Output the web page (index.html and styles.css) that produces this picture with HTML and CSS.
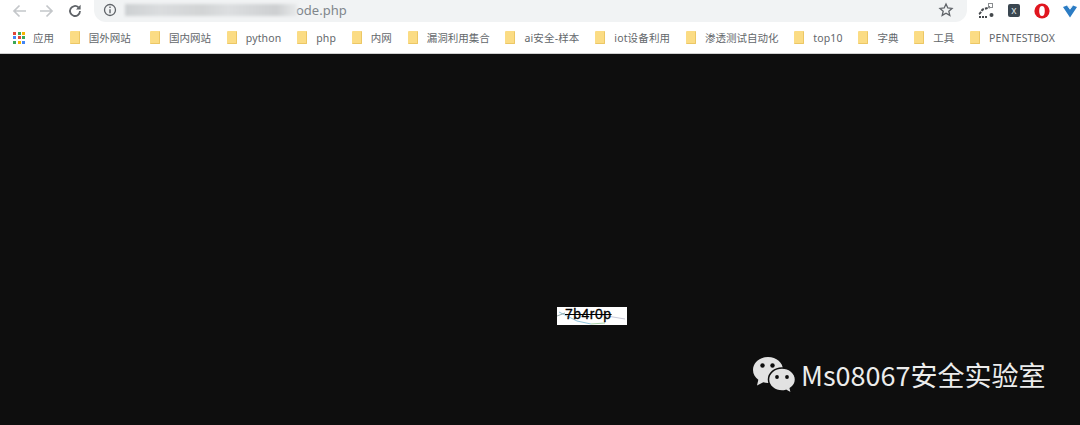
FILE: index.html
```html
<!DOCTYPE html>
<html lang="en">
<head>
    <meta charset="UTF-8">
    <title>code.php</title>
    <link rel="stylesheet" href="styles.css">
</head>
<body>
    <div class="toolbar">
        <div class="nav">
            <svg class="nav-icon" viewBox="0 0 16 16"><path d="M15 8H3M8.500 2.500L3 8l5.500 5.500" fill="none" stroke="#c4c7ca" stroke-width="1.700"/></svg>
            <svg class="nav-icon" viewBox="0 0 16 16"><path d="M1 8h12M7.500 2.500L13 8l-5.500 5.500" fill="none" stroke="#c4c7ca" stroke-width="1.700"/></svg>
            <svg class="nav-icon" viewBox="0 0 16 16"><path d="M13 8a5 5 0 1 1-1.500-3.600" fill="none" stroke="#5f6368" stroke-width="1.800"/><path d="M13.600 1.800v4.600H9z" fill="#5f6368"/></svg>
        </div>
        <div class="omnibox">
            <svg class="info" viewBox="0 0 14 14"><circle cx="7" cy="7" r="5.500" fill="none" stroke="#5f6368" stroke-width="1.300"/><path d="M7 6.200v4M7 3.600v1.400" stroke="#5f6368" stroke-width="1.400"/></svg>
            <div class="url">
                <span class="url-blur"></span>
                <span class="url-text">ode.php</span>
            </div>
            <svg class="star" viewBox="0 0 16 16"><path d="M8 2l1.800 4 4.200.4-3.200 2.800 1 4.200L8 11.200l-3.800 2.200 1-4.200L2 6.400 6.200 6z" fill="none" stroke="#5f6368" stroke-width="1.300"/></svg>
        </div>
        <div class="extensions">
            <svg class="ext" viewBox="0 0 16 16"><path d="M1 11c2-1 2-4 5-5s4-1 6-2" fill="none" stroke="#44484c" stroke-width="2" stroke-dasharray="3 1"/><rect x="10.500" y="0.500" width="4" height="4" fill="none" stroke="#8a8d90"/><circle cx="13.500" cy="12" r="2" fill="#44484c"/><path d="M1 13h2v2H1zM4 13h2v2H4zM7 13h2v2H7z" fill="#44484c"/></svg>
            <span class="ext-x">x</span>
            <svg class="ext" viewBox="0 0 16 16"><circle cx="8" cy="8" r="7.600" fill="#e0161f"/><ellipse cx="8" cy="8" rx="2.800" ry="5" fill="#fff"/></svg>
            <svg class="ext" viewBox="0 0 16 16"><path d="M1 4l4-1.500 3 4 3-4 4 1.500-7 10.500z" fill="#2b7cc4"/><path d="M5 2.500l3 4 3-4-3 1z" fill="#e8f2fa"/></svg>
        </div>
    </div>
    <div class="bookmarks">
        <div class="bookmark apps-item">
            <div class="apps">
                <i class="r"></i><i class="g"></i><i class="y"></i>
                <i class="b"></i><i class="r"></i><i class="g"></i>
                <i class="g"></i><i class="y"></i><i class="b"></i>
            </div>
            <span>应用</span>
        </div>
        <div class="bookmark"><i class="folder"></i><span>国外网站</span></div>
        <div class="bookmark wide"><i class="folder"></i><span>国内网站</span></div>
        <div class="bookmark"><i class="folder"></i><span class="latin">python</span></div>
        <div class="bookmark"><i class="folder"></i><span class="latin">php</span></div>
        <div class="bookmark"><i class="folder"></i><span>内网</span></div>
        <div class="bookmark"><i class="folder"></i><span>漏洞利用集合</span></div>
        <div class="bookmark"><i class="folder"></i><span class="latin">ai安全-样本</span></div>
        <div class="bookmark"><i class="folder"></i><span class="latin">iot设备利用</span></div>
        <div class="bookmark"><i class="folder"></i><span>渗透测试自动化</span></div>
        <div class="bookmark"><i class="folder"></i><span class="latin">top10</span></div>
        <div class="bookmark"><i class="folder"></i><span>字典</span></div>
        <div class="bookmark"><i class="folder"></i><span>工具</span></div>
        <div class="bookmark"><i class="folder"></i><span class="latin">PENTESTBOX</span></div>
    </div>
    <div class="page">
        <div class="captcha">
            <svg class="captcha-lines" viewBox="0 0 70 18"><path d="M2 5l18 9 14 3" fill="none" stroke="#8fc3dc"/><path d="M34 17l14-1" stroke="#a8d0a8" fill="none"/><path d="M44 8l24 4" stroke="#c8c8d8" fill="none"/><path d="M0 9l8-3" stroke="#9aa" fill="none"/></svg>
            <span class="captcha-text">7b4r0p</span>
        </div>
    </div>
    <div class="watermark">
        <svg class="wechat" viewBox="0 0 44 38">
            <path d="M16 1C7.500 1 1 6.800 1 14c0 4 2.100 7.400 5.300 9.800L5 29.500l6.300-3.300c1.500.4 3 .7 4.700.7 8.500 0 15-5.800 15-13S24.500 1 16 1z" fill="#e2e2e2"/>
            <path d="M30 12c-7.500 0-13.500 5.200-13.500 11.500S22.500 35 30 35c1.400 0 2.800-.2 4-.6l5.500 3-1.200-5c3.300-2.100 5.200-5.400 5.200-8.900C43.500 17.200 37.500 12 30 12z" fill="#e2e2e2" stroke="#0e0e0e" stroke-width="1.500"/>
            <circle cx="10.500" cy="9.500" r="2.200" fill="#0e0e0e"/>
            <circle cx="20.500" cy="9.500" r="2.200" fill="#0e0e0e"/>
            <circle cx="25" cy="21" r="1.900" fill="#0e0e0e"/>
            <circle cx="35" cy="21" r="1.900" fill="#0e0e0e"/>
        </svg>
        <span class="watermark-text">Ms08067安全实验室</span>
    </div>
</body>
</html>
```

FILE: styles.css
```css
html, body {
    margin: 0;
    padding: 0;
    height: 425px;
    overflow: hidden;
    background: #0e0e0e;
    font-family: "Noto Sans", "Noto Sans CJK SC", sans-serif;
}
.toolbar {
    display: flex;
    height: 22px;
    background: #fff;
}
.nav {
    display: flex;
    align-items: center;
    gap: 12px;
    width: 94px;
    padding: 0 0 1px 11px;
    box-sizing: border-box;
}
.nav-icon {
    width: 16px;
    height: 16px;
}
.omnibox {
    display: flex;
    align-items: center;
    width: 873px;
    height: 22px;
    padding: 0 13px 2px 9px;
    box-sizing: border-box;
    background: #f1f3f4;
    border-radius: 0 0 12px 12px;
}
.info {
    width: 14px;
    height: 14px;
    flex: none;
}
.url {
    display: flex;
    align-items: center;
    flex: 1;
    margin-left: 8px;
}
.url-blur {
    width: 172px;
    height: 12px;
    background: linear-gradient(90deg, #cdd0d2, #dadcde 20%, #d2d4d5 45%, #dcdee0 60%, #cdcfd1 88%, #e8eaeb);
    filter: blur(1.500px);
}
.url-text {
    margin-left: -1px;
    font-size: 13px;
    color: #80868b;
}
.star {
    width: 16px;
    height: 16px;
}
.extensions {
    display: flex;
    align-items: center;
    gap: 12px;
    padding: 0 0 1px 11px;
}
.ext {
    width: 16px;
    height: 16px;
    flex: none;
}
.ext-x {
    width: 12px;
    height: 13px;
    margin: 0 2px;
    background: #3a4650;
    border-radius: 2px;
    color: #dfe3e6;
    font-size: 10px;
    line-height: 12px;
    text-align: center;
}
.bookmarks {
    display: flex;
    align-items: center;
    gap: 15.800px;
    height: 32px;
    padding-left: 13px;
    box-sizing: border-box;
    background: #fff;
    border-bottom: 1px solid #d0d0d0;
    font-size: 10.500px;
    color: #63676b;
    white-space: nowrap;
}
.bookmark {
    display: flex;
    align-items: center;
    gap: 9px;
}
.wide {
    margin-left: 3.400px;
}
.latin {
    letter-spacing: 0.150px;
}
.apps-item {
    gap: 8px;
}
.apps {
    display: grid;
    grid-template-columns: repeat(3, 3px);
    gap: 1.500px;
}
.apps i {
    width: 3px;
    height: 3px;
}
.apps .r { background: #e0453a; }
.apps .g { background: #3aa757; }
.apps .y { background: #f5b400; }
.apps .b { background: #4285f4; }
.folder {
    width: 10px;
    height: 13px;
    background: #fbdc84;
    border-right: 1px solid #ecc765;
    border-bottom: 1px solid #ecc765;
    box-sizing: border-box;
    border-radius: 1px;
}
.page {
    padding: 253px 0 0 557px;
}
.captcha {
    position: relative;
    width: 70px;
    height: 18px;
    background: #fff;
}
.captcha-lines {
    position: absolute;
    left: 0;
    top: 0;
    width: 70px;
    height: 18px;
}
.captcha-text {
    position: relative;
    display: block;
    padding-left: 8px;
    font-family: "Liberation Sans", sans-serif;
    font-size: 14px;
    line-height: 15px;
    letter-spacing: 0.500px;
    color: #000;
    -webkit-text-stroke: 0.300px #000;
    text-decoration: line-through;
    text-decoration-thickness: 1px;
}
.watermark {
    position: absolute;
    left: 752px;
    top: 356px;
    display: flex;
    align-items: center;
    gap: 5px;
}
.wechat {
    width: 44px;
    height: 38px;
}
.watermark-text {
    font-family: "Noto Sans CJK SC", sans-serif;
    font-size: 27px;
    line-height: 38px;
    color: #ececec;
}
```
